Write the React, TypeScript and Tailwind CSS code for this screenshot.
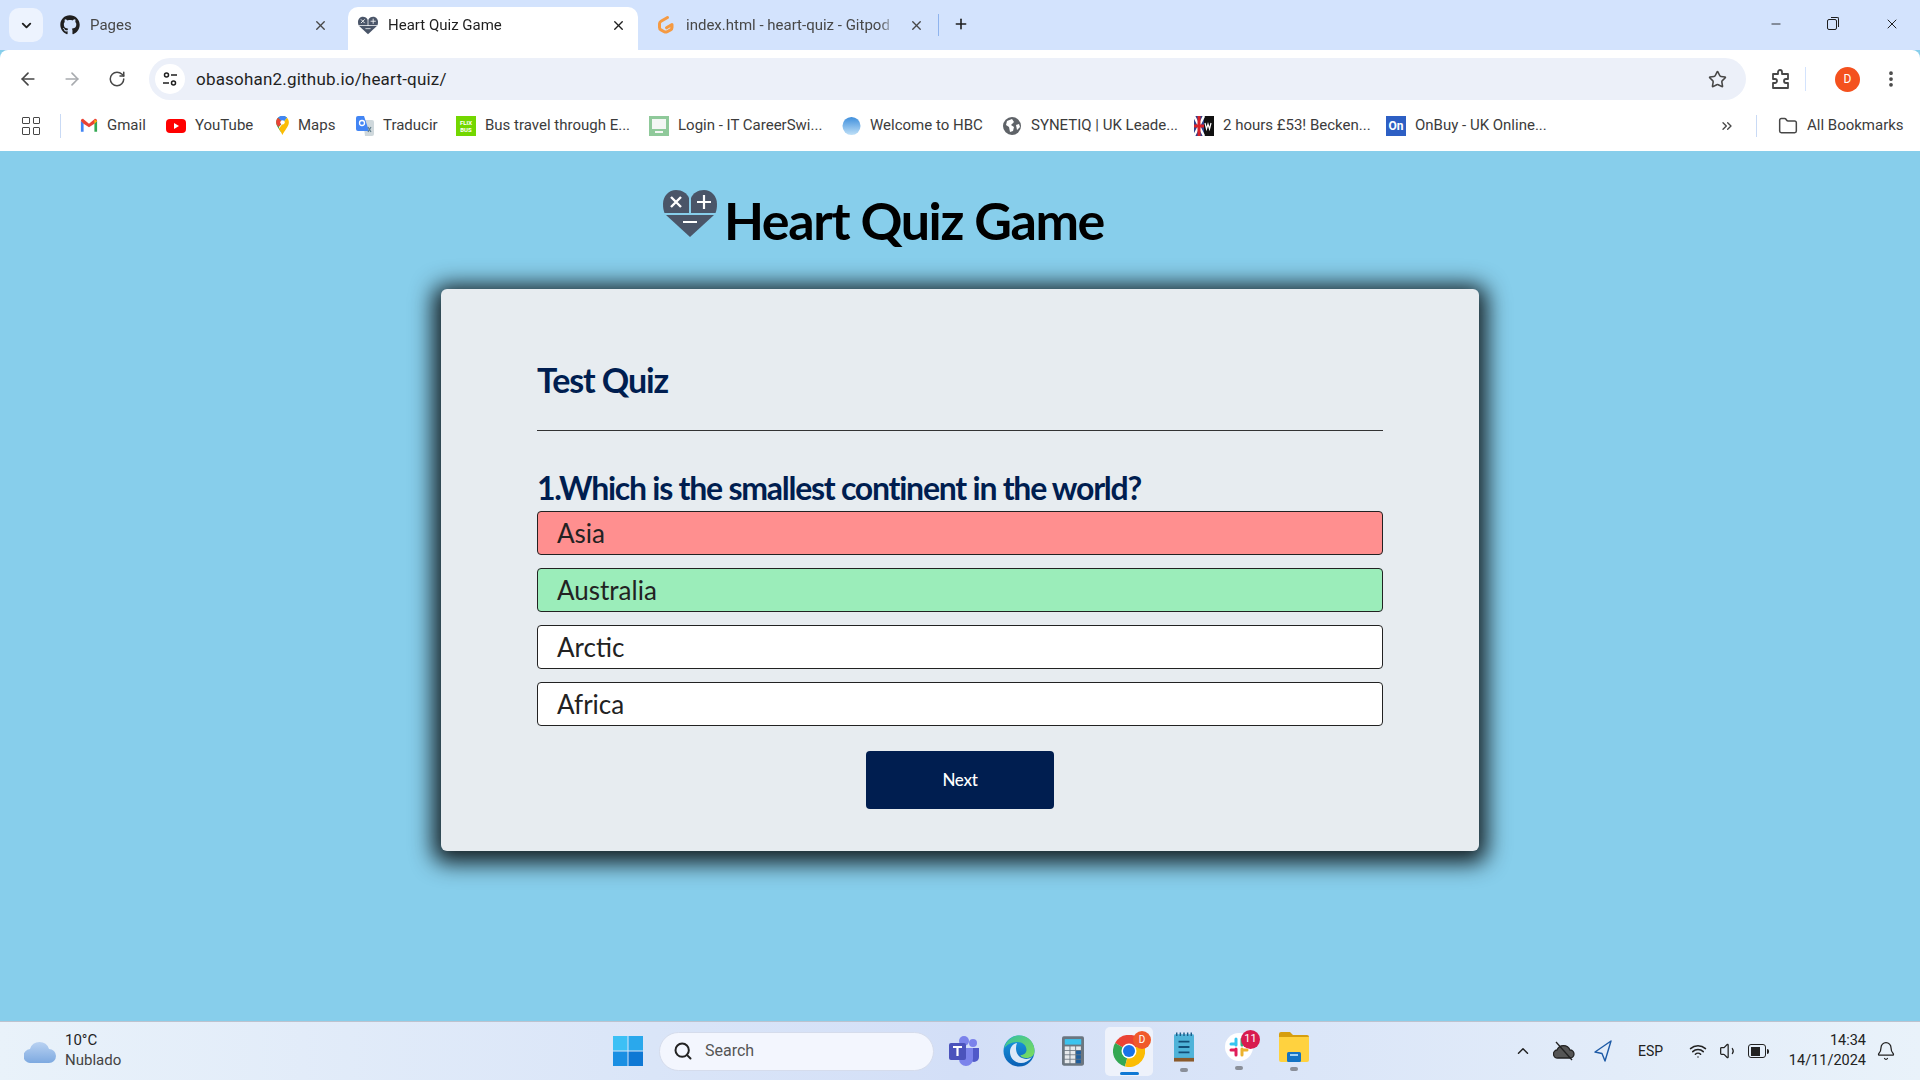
import React from 'react';
import {
  ArrowLeft, ArrowRight, RotateCw, Star, EllipsisVertical, Minus, X, Plus, ChevronDown,
  Folder, ChevronsRight, ChevronUp, Search, Bell, Volume1, Wifi,
} from 'lucide-react';
import { FaGithub } from 'react-icons/fa';

const uiFont = 'font-["Roboto",sans-serif]';

const HeartLogo = ({ className = '' }: { className?: string }) => (
  <svg viewBox="0 0 54 47" className={className}>
    <path d="M26 23H1.500C.5 20 0 18 0 14 0 6 6 0 13 0c6 0 11 3 13 8z" fill="#4a5568" />
    <path d="M28 23h24.500C53.500 20 54 18 54 14 54 6 48 0 41 0c-6 0-11 3-13 8z" fill="#4a5568" />
    <path d="M3 25h48L27 47z" fill="#4a5568" />
    <path d="M8 7l10 10M18 7L8 17" stroke="#fff" strokeWidth="2.400" />
    <path d="M41 5v14M34 12h14" stroke="#fff" strokeWidth="2.200" />
    <path d="M20 32h14" stroke="#fff" strokeWidth="2" />
  </svg>
);

const GitpodIcon = () => (
  <svg viewBox="0 0 20 20" className="h-5 w-5 shrink-0">
    <path d="M11.500 2.500 5 6.200c-1 .6-1.500 1.500-1.500 2.600v3.600c0 1 .5 2 1.500 2.500l3.200 1.800c1 .5 2 .5 3 0l3.300-1.800c1-.6 1.500-1.500 1.500-2.500V9.500L10.500 12.800" fill="none" stroke="#f59a42" strokeWidth="3" strokeLinecap="round" strokeLinejoin="round" />
  </svg>
);

const Tab = ({ icon, title, active }: { icon: React.ReactNode; title: string; active?: boolean }) => (
  <div className={`relative flex h-[43px] w-[290px] items-center pb-[7px] pl-[10px] pr-[12px] ${active ? 'rounded-t-[10px] bg-white text-[#1f1f1f]' : 'text-[#474747]'}`}>
    {icon}
    <span className="ml-[10px] w-[210px] overflow-hidden whitespace-nowrap text-[15px] [mask-image:linear-gradient(to_right,black_92%,transparent)]">{title}</span>
    <X className="ml-auto h-[15px] w-[15px]" strokeWidth={2.200} />
  </div>
);

const GmailIcon = () => (
  <svg viewBox="0 0 20 16" className="h-[15px] w-[18px] shrink-0">
    <path d="M1 15V3l3 2v10z" fill="#4285f4" />
    <path d="M19 15V3l-3 2v10z" fill="#34a853" />
    <path d="M1 3c0-2 2-3 3-2l6 5 6-5c1-1 3 0 3 2l-3 3-6 4-6-4z" fill="#ea4335" />
    <path d="M16 1.500 19 3l-3 3z" fill="#fbbc04" />
  </svg>
);

const YoutubeIcon = () => (
  <svg viewBox="0 0 20 20" className="h-5 w-5 shrink-0">
    <rect x="0" y="3" width="20" height="14" rx="4" fill="#f00" />
    <path d="M8 7l5 3-5 3z" fill="#fff" />
  </svg>
);

const MapsIcon = () => (
  <svg viewBox="0 0 14 22" className="h-[20px] w-[13px] shrink-0">
    <path d="M7 21C5 16 0 12 0 7a7 7 0 0 1 12-5L3 12z" fill="#34a853" />
    <path d="M2 2a7 7 0 0 1 10 0L7 7z" fill="#4285f4" />
    <path d="M2 2 7 7l-4.500 5C1 10.500 0 9 0 7c0-2 .8-3.700 2-5z" fill="#ea4335" />
    <path d="M12 2c1.200 1.300 2 3 2 5 0 5-5 9-7 14-1-2.500-2.500-5-4-7z" fill="#fbbc04" />
    <circle cx="7" cy="7" r="2.400" fill="#fff" />
  </svg>
);

const TranslateIcon = () => (
  <svg viewBox="0 0 18 20" className="h-5 w-[18px] shrink-0">
    <path d="M7 4h9a2 2 0 0 1 2 2v12a2 2 0 0 1-2 2H9z" fill="#cfd8dc" />
    <path d="M2 0h6l5 15H2a2 2 0 0 1-2-2V2a2 2 0 0 1 2-2z" fill="#4285f4" />
    <circle cx="6" cy="7" r="2.500" fill="none" stroke="#fff" strokeWidth="1.300" />
    <path d="M12 11l3 5M15 11l-3 5" stroke="#607d8b" strokeWidth="1.200" />
  </svg>
);

const FlixIcon = () => (
  <span className="flex h-5 w-5 shrink-0 flex-col items-center justify-center bg-[#73d700] text-[6px] font-bold leading-[7px] text-white">
    <span>FLIX</span>
    <span>BUS</span>
  </span>
);

const LoginIcon = () => (
  <svg viewBox="0 0 20 20" className="h-5 w-5 shrink-0">
    <rect width="20" height="20" fill="#8fc99a" />
    <rect x="3" y="3" width="14" height="10" fill="#f3f6f4" />
    <rect x="6" y="15" width="8" height="2" fill="#f3f6f4" />
  </svg>
);

const HbcIcon = () => (
  <svg viewBox="0 0 20 20" className="h-5 w-[19px] shrink-0">
    <defs>
      <linearGradient id="hbc" x1="0" y1="0" x2="0" y2="1">
        <stop offset="0" stopColor="#3f8fdc" />
        <stop offset="1" stopColor="#bfe0f7" />
      </linearGradient>
    </defs>
    <circle cx="10" cy="10" r="9.500" fill="url(#hbc)" />
  </svg>
);

const GlobeIcon = () => (
  <svg viewBox="0 0 20 20" className="h-5 w-5 shrink-0">
    <circle cx="10" cy="10" r="9" fill="#5f6368" />
    <path d="M5 5l5-2 2 3-3 3 3 2-1 4-3 1-1-5-3-2zM14 9l3-1 1 3-3 3z" fill="#fff" />
  </svg>
);

const FlagIcon = () => (
  <svg viewBox="0 0 20 20" className="h-5 w-5 shrink-0">
    <rect width="20" height="20" fill="#111" />
    <rect width="10" height="20" fill="#2b3f8c" />
    <path d="M0 0l10 20M10 0L0 20" stroke="#fff" strokeWidth="2.500" />
    <path d="M5 0v20M0 10h10" stroke="#d8232a" strokeWidth="3" />
    <path d="M11 7l1.500 6L14 8l1.500 5L17 7" stroke="#fff" strokeWidth="1.200" fill="none" />
  </svg>
);

const OnBuyIcon = () => (
  <span className="flex h-5 w-5 shrink-0 items-center justify-center bg-[#2d5fc4] text-[12px] font-bold leading-none text-white">On</span>
);

const bookmarks: { label: string; icon: React.ReactNode; width: number }[] = [
  { label: 'Gmail', icon: <GmailIcon />, width: 86 },
  { label: 'YouTube', icon: <YoutubeIcon />, width: 110 },
  { label: 'Maps', icon: <MapsIcon />, width: 80 },
  { label: 'Traducir', icon: <TranslateIcon />, width: 100 },
  { label: 'Bus travel through E...', icon: <FlixIcon />, width: 193 },
  { label: 'Login - IT CareerSwi...', icon: <LoginIcon />, width: 193 },
  { label: 'Welcome to HBC', icon: <HbcIcon />, width: 160 },
  { label: 'SYNETIQ | UK Leade...', icon: <GlobeIcon />, width: 192 },
  { label: '2 hours £53! Becken...', icon: <FlagIcon />, width: 192 },
  { label: 'OnBuy - UK Online...', icon: <OnBuyIcon />, width: 180 },
];

const answers = [
  { text: 'Asia', tone: 'bg-[#ff8f8f]' },
  { text: 'Australia', tone: 'bg-[#9bedba]' },
  { text: 'Arctic', tone: 'bg-white' },
  { text: 'Africa', tone: 'bg-white' },
];

const TeamsIcon = () => (
  <svg viewBox="0 0 32 30" className="h-[30px] w-[32px]">
    <circle cx="25" cy="7" r="4" fill="#7b83eb" />
    <circle cx="16" cy="5" r="5" fill="#7b83eb" />
    <path d="M21 12h10v9a5 5 0 0 1-10 0z" fill="#5059c9" />
    <path d="M8 12h17v11a7 7 0 0 1-14 0z" fill="#7b83eb" />
    <rect x="1" y="7" width="17" height="17" rx="2" fill="#4b53bc" />
    <path d="M5 11h9M9.500 11v9" stroke="#fff" strokeWidth="2.200" />
  </svg>
);

const EdgeIcon = () => (
  <svg viewBox="0 0 32 32" className="h-8 w-8">
    <defs>
      <linearGradient id="edge1" x1="0" y1="0" x2="1" y2="1">
        <stop offset="0" stopColor="#35c1a0" />
        <stop offset="1" stopColor="#7ddc5c" />
      </linearGradient>
      <linearGradient id="edge2" x1="0" y1="0" x2="0" y2="1">
        <stop offset="0" stopColor="#1b9de2" />
        <stop offset="1" stopColor="#0a5fb4" />
      </linearGradient>
    </defs>
    <circle cx="16" cy="16" r="15.500" fill="url(#edge2)" />
    <path d="M1 14C3 5 10 .5 16 .5 26 .5 31.500 8 31.500 16c0 5-4 7-8 7-3 0-6-1-6-3 3 0 6-2 6-5 0-5-4-8-9-8C8 7 3 10 1 14z" fill="url(#edge1)" />
    <path d="M14 8c-5 1-7 5-7 9 0 6 5 11 11 11 4 0 8-2 11-6-4 3-9 2-12 0-4-3-5-9-3-14z" fill="#e7eefb" opacity="0.95" />
  </svg>
);

const CalcIcon = () => (
  <svg viewBox="0 0 24 32" className="h-8 w-[22px]">
    <rect width="24" height="32" rx="2" fill="#6b7680" />
    <rect x="3" y="3" width="18" height="6" fill="#3cc3ee" />
    {[0, 1, 2].map((c) => [0, 1, 2, 3].map((r) => (
      <rect key={`${c}-${r}`} x={3 + c * 6.200} y={11 + r * 4.800} width="5.200" height="3.900" fill={c === 2 && r > 0 ? '#1f5f9e' : '#e6e9ec'} />
    )))}
  </svg>
);

const ChromeIcon = () => (
  <svg viewBox="0 0 32 32" className="h-8 w-8">
    <path d="M16 16 2.100 8A16 16 0 0 1 30 8z" fill="#ea4335" />
    <path d="M16 16 2.100 8A16 16 0 0 0 12 31.500z" fill="#34a853" />
    <path d="M16 16 30 8a16 16 0 0 1-18 23.500z" fill="#fbbc04" />
    <circle cx="16" cy="16" r="7.500" fill="#fff" />
    <circle cx="16" cy="16" r="6" fill="#1a73e8" />
  </svg>
);

const NotepadIcon = () => (
  <svg viewBox="0 0 22 32" className="h-8 w-[20px]">
    <rect y="2" width="22" height="28" rx="1.500" fill="#4fb3d9" />
    <rect y="28" width="22" height="4" fill="#8a5a2b" />
    <path d="M5 10h12M5 16h12M5 22h12" stroke="#124e78" strokeWidth="2" />
    <path d="M3 0v4M7 0v4M11 0v4M15 0v4M19 0v4" stroke="#1c5d8a" strokeWidth="1.600" />
  </svg>
);

const SlackIcon = () => (
  <svg viewBox="0 0 28 28" className="h-[28px] w-[28px]">
    <circle cx="14" cy="14" r="14" fill="#fff" />
    <path d="M11 6v6M6 11h5" stroke="#36c5f0" strokeWidth="3" strokeLinecap="round" />
    <path d="M22 11h-5M17 6v6" stroke="#2eb67d" strokeWidth="3" strokeLinecap="round" />
    <path d="M17 22v-6M22 17h-5" stroke="#ecb22e" strokeWidth="3" strokeLinecap="round" />
    <path d="M6 17h5M11 22v-6" stroke="#e01e5a" strokeWidth="3" strokeLinecap="round" />
  </svg>
);

const FilesIcon = () => (
  <svg viewBox="0 0 30 30" className="h-[30px] w-[30px]">
    <path d="M0 2a2 2 0 0 1 2-2h9l3 3h14a2 2 0 0 1 2 2v4H0z" fill="#d69e0f" />
    <path d="M0 5h30v23a2 2 0 0 1-2 2H2a2 2 0 0 1-2-2z" fill="#ffd23f" />
    <rect x="8" y="20" width="14" height="10" rx="1.500" fill="#1273c4" />
    <rect x="11" y="22" width="8" height="2" fill="#9fd2f5" />
  </svg>
);

const Dot = () => <span className="mt-[5px] h-[4px] w-[8px] rounded-full bg-[#8a8f99]" />;

const App = () => (
  <div className={`flex h-screen w-full flex-col overflow-hidden bg-[#87ceeb] ${uiFont}`}>
    {/* Tab strip */}
    <div className="flex h-[50px] shrink-0 items-end bg-[#d3e3fd] pl-[9px]">
      <div className="mb-[8px] flex h-[34px] w-[34px] items-center justify-center rounded-[10px] bg-[#edf3fe]">
        <ChevronDown className="h-[15px] w-[15px] text-[#1f1f1f]" strokeWidth={3} />
      </div>
      <div className="ml-[7px] flex gap-[8px]">
        <Tab icon={<FaGithub className="h-5 w-5 shrink-0 text-[#1f1f1f]" />} title="Pages" />
        <Tab icon={<HeartLogo className="h-[19px] w-5 shrink-0" />} title="Heart Quiz Game" active />
        <Tab icon={<GitpodIcon />} title="index.html - heart-quiz - Gitpod" />
      </div>
      <span className="mb-[14px] ml-[2px] h-[22px] w-[1px] bg-[#8fb4ee]" />
      <Plus className="mb-[18px] ml-[14px] h-[16px] w-[16px] text-[#1f1f1f]" strokeWidth={2.400} />
      <div className="ml-auto flex h-full items-start">
        <Minus className="mr-[44px] mt-[17px] h-[14px] w-[14px] text-[#1f1f1f]" strokeWidth={1.500} />
        <span className="relative mr-[47px] mt-[19px] h-[11px] w-[10px] rounded-[2px] border border-[#1f1f1f]">
          <span className="absolute -right-[3px] -top-[3px] h-[10px] w-[8px] rounded-tr-[2px] border-r border-t border-[#1f1f1f]" />
        </span>
        <X className="mr-[20px] mt-[16px] h-[16px] w-[16px] text-[#1f1f1f]" strokeWidth={1.500} />
      </div>
    </div>

    {/* Toolbar */}
    <div className="flex h-[50px] shrink-0 items-center rounded-t-[8px] bg-white pt-[8px]">
      <ArrowLeft className="ml-[18px] h-5 w-5 text-[#474747]" strokeWidth={2} />
      <ArrowRight className="ml-[24px] h-5 w-5 text-[#a8abaf]" strokeWidth={2} />
      <RotateCw className="ml-[26px] h-[18px] w-[18px] text-[#474747]" strokeWidth={2} />
      <div className="ml-[23px] flex h-[42px] w-[1597px] items-center rounded-full bg-[#ecf0f9] pl-[6px]">
        <span className="flex h-[30px] w-[30px] items-center justify-center rounded-full bg-white">
          <svg viewBox="0 0 16 16" className="h-4 w-4" fill="none" stroke="#1f1f1f" strokeWidth="1.500">
            <circle cx="4.500" cy="4" r="2" />
            <path d="M9 4h6M1 12h6" />
            <circle cx="11.500" cy="12" r="2" />
          </svg>
        </span>
        <span className="ml-[11px] pt-[1px] text-[17px] tracking-[0.2px] text-[#1f1f1f]">obasohan2.github.io/heart-quiz/</span>
        <Star className="ml-auto mr-[19px] h-[19px] w-[19px] text-[#474747]" strokeWidth={2} />
      </div>
      <svg viewBox="0 0 20 20" className="ml-[25px] h-5 w-5" fill="none" stroke="#474747" strokeWidth="1.800" strokeLinejoin="round">
        <path d="M2 5h5V3a2 2 0 0 1 4 0v2h6v5h-2a2 2 0 0 0 0 4h2v5H2v-5h2a2 2 0 0 0 0-4H2z" />
      </svg>
      <span className="ml-[14px] h-[24px] w-[1px] bg-[#d3e3fd]" />
      <span className="ml-[29px] flex h-[25px] w-[25px] items-center justify-center rounded-full bg-[#f4511e] text-[12px] text-white">D</span>
      <EllipsisVertical className="ml-[21px] h-5 w-5 text-[#474747]" strokeWidth={2.500} />
    </div>

    {/* Bookmarks */}
    <div className="flex h-[51px] shrink-0 items-center bg-white text-[15px] text-[#3c3c3c]">
      <span className="ml-[22px] grid h-[18px] w-[18px] grid-cols-2 gap-[3px]">
        {[0, 1, 2, 3].map((i) => <span key={i} className="rounded-[1px] border-[1.500px] border-[#474747]" />)}
      </span>
      <span className="ml-[20px] mr-[19px] h-[24px] w-[1px] bg-[#c9daf5]" />
      {bookmarks.map((b) => (
        <div key={b.label} className="flex shrink-0 items-center gap-[9px] whitespace-nowrap" style={{ width: b.width }}>
          {b.icon}
          <span>{b.label}</span>
        </div>
      ))}
      <ChevronsRight className="ml-[153px] h-[16px] w-[16px] text-[#474747]" strokeWidth={2} />
      <span className="ml-[21px] h-[22px] w-[1px] bg-[#c9daf5]" />
      <Folder className="ml-[21px] h-5 w-5 text-[#474747]" strokeWidth={1.800} />
      <span className="ml-[9px] whitespace-nowrap">All Bookmarks</span>
    </div>

    {/* Page */}
    <main className="flex flex-1 flex-col items-center font-['Lato',sans-serif]">
      <div className="mt-[39px] flex h-[61px] items-center self-start pl-[663px]">
        <HeartLogo className="mb-[15px] mr-[7px] h-[47px] w-[54px]" />
        <h1 className="text-[52px] font-bold leading-[61px] tracking-[-1.400px] text-black">Heart Quiz Game</h1>
      </div>
      <section className="mt-[38px] flex h-[562px] w-[1038px] flex-col rounded-[6px] bg-[#e7ecf0] px-[96px] pb-[42px] pt-[71px] shadow-[0_4px_22px_8px_rgba(0,0,0,0.85)]">
        <h2 className="text-[34px] font-bold leading-[40px] tracking-[-1.100px] text-[#001e50]">Test Quiz</h2>
        <hr className="mt-[30px] border-t border-[#333]" />
        <h3 className="mt-[37px] text-[32px] font-bold leading-[40px] tracking-[-1.250px] text-[#001e50]">1.Which is the smallest continent in the world?</h3>
        <div className="mt-[3px] flex flex-col gap-[13px]">
          {answers.map((a) => (
            <div key={a.text} className={`flex h-[44px] items-center rounded-[4px] border border-[#222] pl-[19px] text-[26px] text-[#222] ${a.tone}`}>{a.text}</div>
          ))}
        </div>
        <button className="mx-auto mt-[25px] h-[58px] w-[188px] rounded-[4px] bg-[#001e50] text-[17px] font-medium tracking-[-0.3px] text-white">Next</button>
      </section>
    </main>

    {/* Taskbar */}
    <footer className="flex h-[59px] shrink-0 items-center border-t border-[#bcc3cf] bg-gradient-to-r from-[#e9f2fa] via-[#d3dff7] to-[#e9f2fa]">
      <svg viewBox="0 0 32 24" className="ml-[24px] h-[24px] w-[32px]">
        <defs>
          <linearGradient id="cloud" x1="0" y1="0" x2="0" y2="1">
            <stop offset="0" stopColor="#b9d2f2" />
            <stop offset="1" stopColor="#7da9e0" />
          </linearGradient>
        </defs>
        <path d="M7 24a7 7 0 0 1-1-14 10 10 0 0 1 19 0 7 7 0 0 1 0 14z" fill="url(#cloud)" />
      </svg>
      <div className="ml-[9px] w-[548px] pb-[2px] text-[15px] leading-[20px] text-[#1f1f1f]">
        <div>10°C</div>
        <div className="text-[#444]">Nublado</div>
      </div>
      <svg viewBox="0 0 30 30" className="h-[30px] w-[30px]">
        <rect width="14.500" height="14.500" fill="#3cc0f5" />
        <rect x="15.500" width="14.500" height="14.500" fill="#2aa8ec" />
        <rect y="15.500" width="14.500" height="14.500" fill="#1a8fe3" />
        <rect x="15.500" y="15.500" width="14.500" height="14.500" fill="#0f78d4" />
      </svg>
      <div className="ml-[16px] flex h-[39px] w-[275px] items-center rounded-full border border-[#d5dcec] bg-[#f3f6fe] pl-[13px] text-[16px] text-[#555]">
        <Search className="h-5 w-5 text-[#222]" strokeWidth={2.400} />
        <span className="ml-[12px]">Search</span>
      </div>
      <div className="ml-[14px] flex w-[32px] justify-center"><TeamsIcon /></div>
      <div className="ml-[23px] flex w-[32px] justify-center"><EdgeIcon /></div>
      <div className="ml-[26px] flex w-[24px] justify-center"><CalcIcon /></div>
      <div className="relative ml-[20px] flex h-[49px] w-[48px] flex-col items-center justify-center rounded-[5px] bg-[#eef2fb]">
        <ChromeIcon />
        <span className="absolute right-[2px] top-[4px] flex h-[18px] w-[18px] items-center justify-center rounded-full bg-[#f0592a] text-[10px] text-white">D</span>
        <span className="absolute bottom-[1px] h-[3px] w-[19px] rounded-full bg-[#0f78d4]" />
      </div>
      <div className="ml-[20px] flex w-[22px] flex-col items-center"><NotepadIcon /><Dot /></div>
      <div className="relative ml-[28px] flex w-[32px] flex-col items-center">
        <SlackIcon />
        <Dot />
        <span className="absolute -right-[5px] -top-[3px] flex h-[19px] w-[19px] items-center justify-center rounded-full bg-[#d81b4f] text-[11px] text-white">11</span>
      </div>
      <div className="ml-[24px] flex w-[30px] flex-col items-center"><FilesIcon /><Dot /></div>
      <ChevronUp className="ml-[205px] h-[18px] w-[18px] text-[#222]" strokeWidth={2} />
      <svg viewBox="0 0 22 20" className="ml-[21px] h-5 w-[22px]" fill="#555" stroke="#222" strokeWidth="1.300">
        <path d="M5 17a4 4 0 0 1-1-8 7 7 0 0 1 13 0 4 4 0 0 1 0 8z" />
        <path d="M3 1l16 18" />
      </svg>
      <svg viewBox="0 0 20 22" className="ml-[18px] h-[22px] w-5" fill="none" stroke="#1d5aa6" strokeWidth="1.400" strokeLinejoin="round">
        <path d="M18 1 2 12l7 1.500L12 21z" />
      </svg>
      <span className="ml-[25px] text-[14px] text-[#222]">ESP</span>
      <Wifi className="ml-[26px] h-[18px] w-[18px] text-[#222]" strokeWidth={2} />
      <Volume1 className="ml-[12px] h-5 w-5 text-[#222]" strokeWidth={1.500} />
      <span className="relative ml-[9px] flex h-[14px] w-[18px] items-center rounded-[3px] border-[1.500px] border-[#222] p-[1.500px]">
        <span className="h-full w-[9px] bg-[#222]" />
        <span className="absolute -right-[4px] h-[5px] w-[2px] rounded-r bg-[#222]" />
      </span>
      <div className="ml-auto text-right text-[14.500px] leading-[20px] text-[#222]">
        <div>14:34</div>
        <div>14/11/2024</div>
      </div>
      <Bell className="ml-[10px] mr-[24px] h-5 w-5 text-[#222]" strokeWidth={1.500} />
    </footer>
  </div>
);

export default App;
